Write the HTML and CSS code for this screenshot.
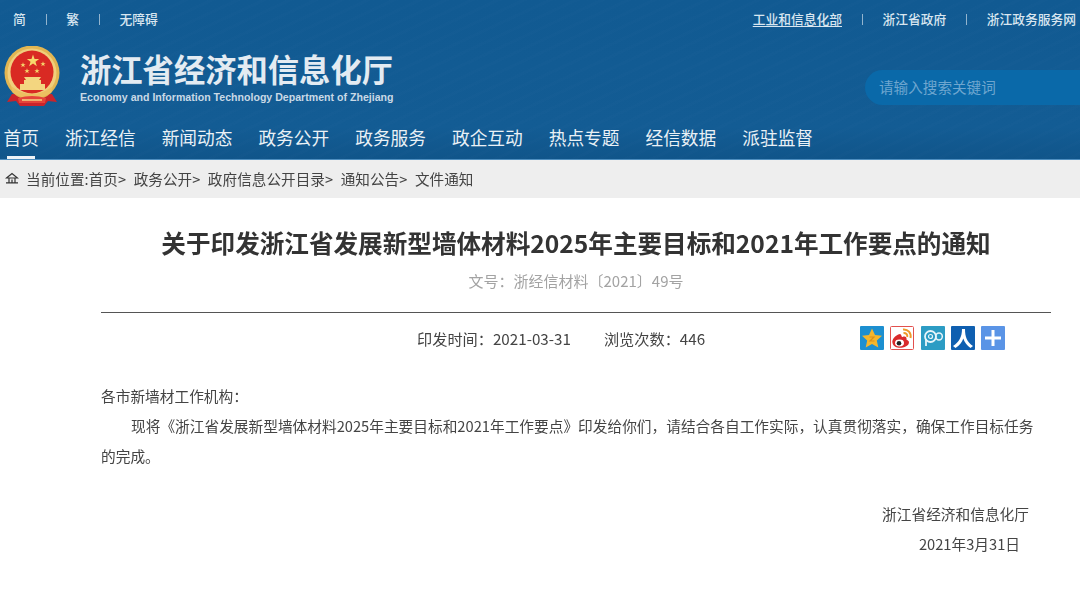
FILE: index.html
```html
<!DOCTYPE html>
<html lang="zh-CN">
<head>
<meta charset="utf-8">
<title>关于印发浙江省发展新型墙体材料2025年主要目标和2021年工作要点的通知</title>
<link rel="stylesheet" href="styles.css">
</head>
<body>
<header class="masthead">
  <div class="topbar">
    <ul class="toplinks toplinks-left">
      <li>简</li><li>繁</li><li>无障碍</li>
    </ul>
    <ul class="toplinks toplinks-right">
      <li><span class="is-hover">工业和信息化部</span></li><li>浙江省政府</li><li>浙江政务服务网</li>
    </ul>
  </div>
  <div class="brandrow">
    <div class="brand">
      <svg class="emblem" viewBox="0 0 56 62" aria-hidden="true">
        <defs>
          <path id="star" d="M0 -1 L.24 -.31 .95 -.31 .38 .12 .59 .81 0 .4 -.59 .81 -.38 .12 -.95 -.31 -.24 -.31 Z" fill="#f6d86c"/>
        </defs>
        <path d="M8 48 L3 56 L12 55 L16 60 H40 L44 55 L53 56 L48 48 Z" fill="#c9242b"/>
        <circle cx="28" cy="27" r="27.500" fill="#e2b652"/>
        <circle cx="28" cy="27" r="24.500" fill="#f0cf7c"/>
        <circle cx="28" cy="26" r="21.500" fill="#d92a23"/>
        <use href="#star" transform="translate(29 15) scale(6.500)"/>
        <use href="#star" transform="translate(19 19) scale(2.800)"/>
        <use href="#star" transform="translate(39 18) scale(2.800)"/>
        <use href="#star" transform="translate(23 25) scale(2.800)"/>
        <use href="#star" transform="translate(33 25) scale(2.800)"/>
        <path d="M20 31 H37 L35 34 H37 V38 H41 V44 H16 V38 H20 V34 H22 Z" fill="#f3d680"/>
        <path d="M7 40 Q28 56 49 40 L47 47 Q28 58 9 47 Z" fill="#ecc061"/>
        <path d="M14 52 Q28 48 42 52 L41 57 H15 Z" fill="#e5443a"/>
        <path d="M18 54 H38" stroke="#f3d680" stroke-width="1.500"/>
      </svg>
      <div class="brandtext">
        <h1 class="brandname">浙江省经济和信息化厅</h1>
        <p class="brandsub">Economy and Information Technology Department of Zhejiang</p>
      </div>
    </div>
    <div class="search">请输入搜索关键词</div>
  </div>
  <nav class="mainnav">
    <a class="navitem is-current">首页</a>
    <a class="navitem">浙江经信</a>
    <a class="navitem">新闻动态</a>
    <a class="navitem">政务公开</a>
    <a class="navitem">政务服务</a>
    <a class="navitem">政企互动</a>
    <a class="navitem">热点专题</a>
    <a class="navitem">经信数据</a>
    <a class="navitem">派驻监督</a>
  </nav>
</header>

<div class="crumbs">
  <svg class="homeicon" viewBox="0 0 14 12" aria-hidden="true">
    <path d="M1.500 6 L7 1.500 L12.500 6 Z M4 6 V10.500 M10 6 V10.500 M7 7.500 V10.500 M1 10.800 H13" fill="none" stroke="#333" stroke-width="1.200"/>
  </svg>
  <span class="crumb">当前位置:首页&gt;</span>
  <span class="crumb">政务公开&gt;</span>
  <span class="crumb">政府信息公开目录&gt;</span>
  <span class="crumb">通知公告&gt;</span>
  <span class="crumb">文件通知</span>
</div>

<main class="article">
  <h2 class="article-title">关于印发浙江省发展新型墙体材料2025年主要目标和2021年工作要点的通知</h2>
  <p class="docno">文号：浙经信材料〔2021〕49号</p>
  <div class="meta">
    <div class="meta-info">
      <span>印发时间：2021-03-31</span>
      <span>浏览次数：446</span>
    </div>
    <div class="share">
      <svg class="shareicon" viewBox="0 0 24 24" aria-hidden="true">
        <rect width="24" height="24" rx="1" fill="#1c8fd0"/>
        <path d="M12 2.500 L15 9 L22 9.800 L16.800 14.500 L18.300 21.500 L12 18 L5.700 21.500 L7.200 14.500 L2 9.800 L9 9 Z" fill="#f4b62c"/>
        <path d="M9.500 11 H14 L10 15 H14.500" fill="none" stroke="#d98f1a" stroke-width="1.200"/>
      </svg>
      <svg class="shareicon" viewBox="0 0 24 24" aria-hidden="true">
        <rect x=".5" y=".5" width="23" height="23" rx="1" fill="#fff" stroke="#e2504e"/>
        <path d="M10 8 C5 9 1.500 14 2.500 17 C3.500 21.500 9 22.500 13 21.500 C18 20.500 20 17 18.500 15 C17.800 14 16.500 14 16.500 13.500 C17 11 15 10 12.500 11 C11.500 11.500 11.500 8 10 8 Z" fill="#d92b2c"/>
        <ellipse cx="9.500" cy="17" rx="4.500" ry="3.400" fill="#fff"/>
        <circle cx="9" cy="17.200" r="2.300" fill="#222"/>
        <path d="M13 3.500 C18 3 21.500 7 20.500 12 M13.500 7 C16 6.800 17.800 8.500 17.200 11" fill="none" stroke="#ef9a2b" stroke-width="2"/>
      </svg>
      <svg class="shareicon" viewBox="0 0 24 24" aria-hidden="true">
        <rect width="24" height="24" rx="1" fill="#2c9cc4"/>
        <circle cx="9.500" cy="10.500" r="5.500" fill="none" stroke="#e8f5fa" stroke-width="1.800"/>
        <circle cx="9.500" cy="10.500" r="2" fill="none" stroke="#e8f5fa" stroke-width="1.200"/>
        <path d="M5 13 V20" stroke="#e8f5fa" stroke-width="1.800"/>
        <ellipse cx="18" cy="10.500" rx="3.300" ry="3.500" fill="none" stroke="#e8f5fa" stroke-width="1.500"/>
      </svg>
      <svg class="shareicon" viewBox="0 0 24 24" aria-hidden="true">
        <rect width="24" height="24" rx="1" fill="#0f5fb0"/>
        <path d="M11 3 H14 C14 11 16 16 22 20 L19.500 22 C16 19.500 13.500 16.500 12.300 12.500 C11 16.500 8.500 19.500 4.500 22 L2 20 C8 16 11 11 11 3 Z" fill="#fff"/>
      </svg>
      <svg class="shareicon" viewBox="0 0 24 24" aria-hidden="true">
        <rect width="24" height="24" rx="1" fill="#5a94e6"/>
        <path d="M10.500 4 H13.500 V10.500 H20 V13.500 H13.500 V20 H10.500 V13.500 H4 V10.500 H10.500 Z" fill="#fff"/>
      </svg>
    </div>
  </div>
  <div class="article-body">
    <p class="salute">各市新墙材工作机构：</p>
    <p class="para">现将《浙江省发展新型墙体材料2025年主要目标和2021年工作要点》印发给你们，请结合各自工作实际，认真贯彻落实，确保工作目标任务的完成。</p>
    <p class="sign">浙江省经济和信息化厅</p>
    <p class="date">2021年3月31日</p>
  </div>
</main>
</body>
</html>
```
FILE: styles.css
```css
* { box-sizing: border-box; }
html, body { margin: 0; padding: 0; }
body {
  width: 1080px;
  height: 590px;
  overflow: hidden;
  background: #fff;
  color: #3a3a3a;
  font-family: "Noto Sans CJK SC", "Noto Sans", sans-serif;
  filter: blur(.35px);
}
p, h1, h2, ul { margin: 0; padding: 0; }
ul { list-style: none; }

.masthead {
  height: 160px;
  color: #fff;
  background-color: #125a91;
  background-image:
    repeating-linear-gradient(155deg, rgba(255,255,255,.007) 0 3px, transparent 3px 11px),
    linear-gradient(180deg, #115a92 0%, #135c94 80%, #10558a 100%);
  border-bottom: 1px solid #4f8fc0;
}

.topbar {
  display: flex;
  justify-content: space-between;
  height: 38px;
  padding: 0 4px 0 13px;
  align-items: center;
  font-size: 12.750px;
  font-weight: 500;
  color: #d9e6f0;
}
.toplinks { display: flex; }
.toplinks li { display: flex; align-items: center; line-height: 16px; }
.toplinks li + li { margin-left: 20px; }
.toplinks li + li::before {
  content: "";
  width: 1px;
  height: 11px;
  margin-right: 19.500px;
  background: rgba(255,255,255,.55);
}
.is-hover { text-decoration: underline; text-underline-offset: 2px; }

.brandrow {
  display: flex;
  justify-content: space-between;
  height: 80px;
  padding-left: 4px;
}
.brand { display: flex; align-items: flex-start; }
.emblem { width: 56px; height: 62px; margin-top: 8px; display: block; }
.brandtext { margin: 12px 0 0 20px; width: 314px; }
.brandname {
  font-size: 31.300px;
  font-weight: 700;
  line-height: 38px;
  color: #e3ebf2;
  white-space: nowrap;
}
.brandsub {
  font-family: "Liberation Sans", sans-serif;
  font-size: 10.600px;
  font-weight: 700;
  line-height: 14px;
  margin-top: 2px;
  color: #c9d9e6;
  white-space: nowrap;
}
.search {
  margin-top: 32px;
  width: 215px;
  height: 35px;
  padding-left: 14px;
  line-height: 33px;
  font-size: 14.600px;
  color: #6ea6cf;
  background: #0a69a9;
  border-radius: 18px 0 0 18px;
}

.mainnav {
  display: flex;
  gap: 26px;
  height: 41px;
  padding-left: 3.500px;
}
.navitem {
  position: relative;
  font-size: 17.700px;
  line-height: 20px;
  padding-top: 9px;
  color: #eaf1f6;
  white-space: nowrap;
}
.navitem.is-current::after {
  content: "";
  position: absolute;
  left: 3px;
  right: 4px;
  bottom: 0;
  height: 3px;
  background: #eef3f7;
}

.crumbs {
  display: flex;
  align-items: center;
  gap: 7.500px;
  height: 38px;
  padding: 0 0 2px 5px;
  font-size: 14.600px;
  letter-spacing: .05px;
  color: #444;
  background: #eeeeee;
}
.homeicon { width: 14px; height: 12px; margin-right: -.5px; }

.article { padding: 0 29px 0 101px; }
.article-title {
  margin: 29px 0 0;
  font-size: 24.600px;
  font-weight: 700;
  line-height: 30px;
  text-align: center;
  color: #333;
  white-space: nowrap;
}
.docno {
  margin-top: 13px;
  font-size: 15px;
  line-height: 22px;
  text-align: center;
  color: #a3a3a3;
}
.meta {
  display: flex;
  align-items: center;
  height: 50px;
  margin-top: 20px;
  border-top: 1px solid #555;
  padding-left: 316px;
  font-size: 15.200px;
  color: #444;
}
.meta-info { display: flex; gap: 33px; width: 443px; }
.share { display: flex; gap: 6.300px; }
.shareicon { width: 24px; height: 24px; display: block; }

.article-body {
  margin-top: 19px;
  font-size: 14.700px;
  line-height: 30px;
  color: #444;
}
.para { text-indent: 30px; width: 940px; }
.sign { margin-top: 28px; text-align: right; padding-right: 22px; }
.date { text-align: right; padding-right: 31px; }
```
